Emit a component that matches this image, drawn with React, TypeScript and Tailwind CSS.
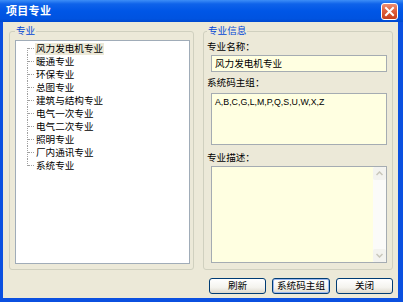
import React from "react";

const items = [
  "风力发电机专业",
  "暖通专业",
  "环保专业",
  "总图专业",
  "建筑与结构专业",
  "电气一次专业",
  "电气二次专业",
  "照明专业",
  "厂内通讯专业",
  "系统专业",
];

function Btn({ label, focused }: { label: string; focused?: boolean }) {
  return (
    <div
      className={
        "h-[16px] rounded-[3px] border border-[#003c74] bg-[linear-gradient(180deg,#ffffff_0%,#f4f3ee_60%,#dcd8cc_100%)] flex items-center justify-center text-[9.6px] leading-[12px] text-black " +
        (focused ? "shadow-[inset_0_0_0_1px_#9bb8f0]" : "")
      }
    >
      {label}
    </div>
  );
}

export default function App() {
  return (
    <div
      className="w-[403px] h-[302px] flex flex-col bg-[#0b50e0] overflow-hidden"
      style={{ fontFamily: '"Liberation Sans", "Noto Sans CJK SC", sans-serif' }}
    >
      {/* Title bar */}
      <div className="h-[22px] flex items-center justify-between pl-[6px] pr-[5px] bg-[linear-gradient(180deg,#3d8ef7_0%,#0f63ea_18%,#0056e6_50%,#0053e0_85%,#0049cf_100%)]">
        <span className="text-white font-bold text-[11px] leading-[14px] tracking-[0.3px]">项目专业</span>
        <div className="w-[17px] h-[17px] rounded-[3px] border border-white bg-[linear-gradient(180deg,#ec8f74_0%,#e0603d_45%,#c63f1c_100%)] flex items-center justify-center">
          <svg width="11" height="11" viewBox="0 0 11 11">
            <path d="M2 2 L9 9 M9 2 L2 9" stroke="white" strokeWidth="2" strokeLinecap="square" />
          </svg>
        </div>
      </div>

      {/* Body */}
      <div className="flex-1 ml-[3px] mr-[5px] mb-[4px] bg-[#ece9d8] flex flex-col">
        <div className="flex mt-[9px]">
          {/* Left group */}
          <div className="relative ml-[6px] w-[185px] h-[239px] border border-[#d0d0bf] rounded-[3px] pl-[5px] pt-[8px] pr-[3px] pb-[5px]">
            <span className="absolute -top-[7px] left-[5px] px-[1px] bg-[#ece9d8] text-[#0046d5] text-[9.6px] leading-[12px]">专业</span>
            <div className="w-full h-full bg-white border border-[#a0acb8] pt-[1px]">
              {items.map((t, i) => (
                <div key={t} className="h-[13px] flex items-center">
                  <div className="relative w-[19px] h-[13px] shrink-0">
                    <div
                      className={
                        "absolute left-[11px] w-0 border-l border-dotted border-[#a0a0a0] " +
                        (i === 0 ? "top-[6px] bottom-0" : i === items.length - 1 ? "top-0 h-[7px]" : "top-0 bottom-0")
                      }
                    />
                    <div className="absolute left-[12px] top-[6px] w-[6px] h-0 border-t border-dotted border-[#a0a0a0]" />
                  </div>
                  <span
                    className={
                      "text-[9.6px] leading-[12px] px-[1px] text-black " + (i === 0 ? "bg-[#ece9d8]" : "")
                    }
                  >
                    {t}
                  </span>
                </div>
              ))}
            </div>
          </div>

          {/* Right group */}
          <div className="relative ml-[9px] w-[190px] h-[239px] border border-[#d0d0bf] rounded-[3px] pl-[3px] pr-[5px] flex flex-col">
            <span className="absolute -top-[7px] left-[3px] px-[1px] bg-[#ece9d8] text-[#0046d5] text-[9.6px] leading-[12px]">专业信息</span>
            <div className="mt-[9px] h-[12px] text-[9.6px] leading-[12px] text-black">专业名称：</div>
            <div className="mt-[2px] ml-[4px] h-[17px] bg-[#ffffe1] border border-[#a5acb2] flex items-center pl-[3px] text-[9.6px] leading-[12px] text-black">
              风力发电机专业
            </div>
            <div className="mt-[5px] h-[12px] text-[9.6px] leading-[12px] text-black">系统码主组：</div>
            <div className="mt-[4px] ml-[4px] h-[52px] bg-[#ffffe1] border border-[#a5acb2] pl-[3px] pt-[2px] text-[8.8px] leading-[12px] text-black">
              A,B,C,G,L,M,P,Q,S,U,W,X,Z
            </div>
            <div className="mt-[7px] h-[12px] text-[9.6px] leading-[12px] text-black">专业描述：</div>
            <div className="mt-[2px] ml-[4px] h-[97px] bg-[#ffffe1] border border-[#a5acb2] flex justify-end">
              <div className="w-[13px] h-full bg-[#fbfbf9] flex flex-col justify-between">
                <div className="h-[13px] bg-[#f3f3ef] rounded-[2px] flex items-center justify-center">
                  <svg width="7" height="5" viewBox="0 0 7 5">
                    <path d="M0.5 4 L3.5 1 L6.5 4" stroke="#c9c7ba" strokeWidth="1.5" fill="none" />
                  </svg>
                </div>
                <div className="h-[13px] bg-[#f3f3ef] rounded-[2px] flex items-center justify-center">
                  <svg width="7" height="5" viewBox="0 0 7 5">
                    <path d="M0.5 1 L3.5 4 L6.5 1" stroke="#c9c7ba" strokeWidth="1.5" fill="none" />
                  </svg>
                </div>
              </div>
            </div>
          </div>
        </div>

        {/* Buttons */}
        <div className="mt-[8px] flex justify-end mr-[5px] gap-[6px]">
          <div className="w-[57px]"><Btn label="刷新" /></div>
          <div className="w-[58px]"><Btn label="系统码主组" focused /></div>
          <div className="w-[57px]"><Btn label="关闭" /></div>
        </div>
      </div>
    </div>
  );
}
